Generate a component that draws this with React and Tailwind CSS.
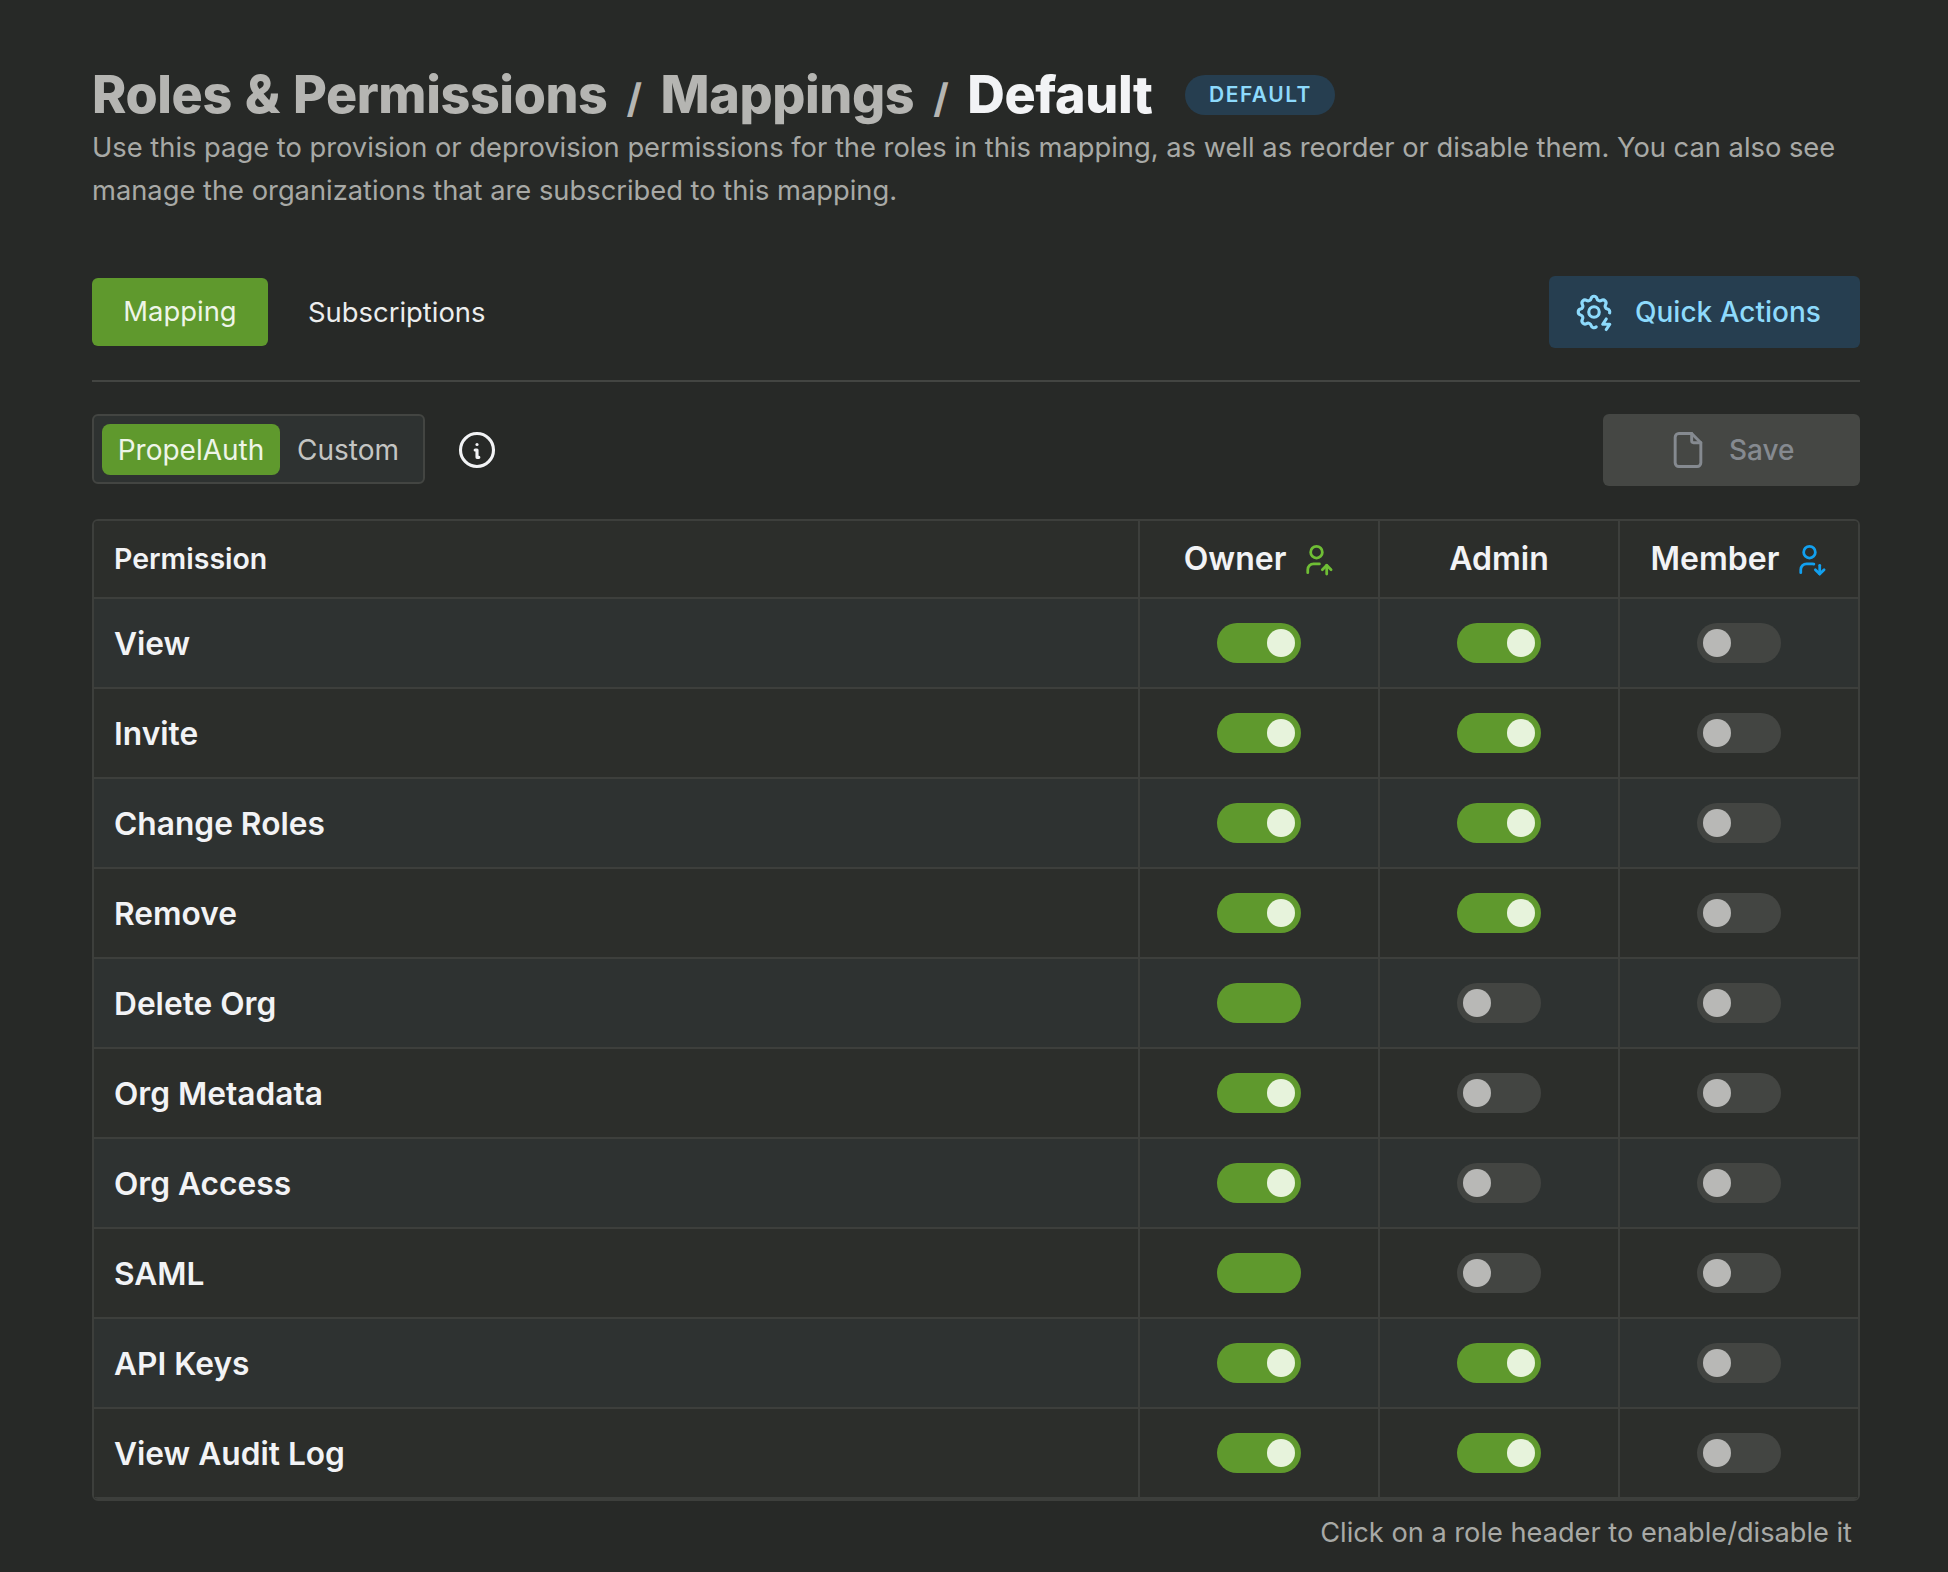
import React from 'react'
import { TbSettingsBolt, TbFile, TbInfoCircle, TbUserUp, TbUserDown } from 'react-icons/tb'

const rows = [
  { name: 'View', owner: true, admin: true, member: false },
  { name: 'Invite', owner: true, admin: true, member: false },
  { name: 'Change Roles', owner: true, admin: true, member: false },
  { name: 'Remove', owner: true, admin: true, member: false },
  { name: 'Delete Org', owner: true, admin: false, member: false, locked: true },
  { name: 'Org Metadata', owner: true, admin: false, member: false },
  { name: 'Org Access', owner: true, admin: false, member: false },
  { name: 'SAML', owner: true, admin: false, member: false, locked: true },
  { name: 'API Keys', owner: true, admin: true, member: false },
  { name: 'View Audit Log', owner: true, admin: true, member: false },
]

const Toggle = ({ on, hideKnob }) => (
  <div
    className={`flex h-10 w-[84px] items-center rounded-full px-1.5 ${
      on ? 'justify-end bg-[#5f992d]' : 'justify-start bg-[#434542]'
    }`}
  >
    {!hideKnob && (
      <div className={`h-7 w-7 rounded-full ${on ? 'bg-[#e7f3dc]' : 'bg-[#b8b8b6]'}`}></div>
    )}
  </div>
)

const App = () => {
  return (
    <div className="min-h-[1572px] bg-[#272927] pl-[92px] pr-[88px] pt-[67px] font-['Inter',sans-serif] text-[#f2f3f5]">
      {/* Header */}
      <div className="flex h-14 items-center">
        <h1 className="text-[52px] font-extrabold leading-none tracking-[-0.4px] text-[#b5b5b2]">
          Roles <span className="mx-[2px]">&amp;</span> Permissions <span className="mx-2 text-[40px] font-bold">/</span> Mappings <span className="mx-2 text-[40px] font-bold">/</span>{' '}
          <span className="text-[#f2f3f5]">Default</span>
        </h1>
        <span className="ml-[33px] flex h-10 w-[150px] items-center justify-center rounded-full bg-[#263e50] text-[21px] font-semibold tracking-[1.5px] text-[#8ddafc]">
          DEFAULT
        </span>
      </div>
      <p className="mt-[3px] text-[27.3px] leading-[43px] text-[#a8a9a6]">
        Use this page to provision or deprovision permissions for the roles in this mapping, as well as reorder or disable them. You can also see manage the organizations that are subscribed to this mapping.
      </p>

      {/* Tabs */}
      <div className="mt-16 flex h-[72px] items-center justify-between">
        <div className="flex items-center gap-10">
          <div className="flex h-[68px] w-[176px] items-center justify-center rounded-md bg-[#5f992d] text-[27.4px] text-[#eef5e8]">
            Mapping
          </div>
          <div className="pt-px text-[27.4px] text-[#eceded]">Subscriptions</div>
        </div>
        <div className="flex h-[72px] w-[311px] items-center gap-5 rounded-md bg-[#263e50] pl-6 text-[28px] font-medium text-[#8ddafc]">
          <TbSettingsBolt size={42} strokeWidth={1.8} />
          Quick Actions
        </div>
      </div>
      <div className="mt-8 h-0.5 bg-[#434542]"></div>

      {/* Source switch + save */}
      <div className="mt-8 flex h-[72px] items-start justify-between">
        <div className="flex items-center">
          <div className="flex h-[70px] w-[333px] items-center rounded-md border-2 border-[#434542] bg-[#2e3231] px-2">
            <div className="flex h-[51px] w-[178px] items-center justify-center rounded-lg bg-[#5f992d] pt-px text-[28px] text-[#eef5e8]">
              PropelAuth
            </div>
            <div className="ml-[17px] pt-px text-[28px] text-[#c4c5c3]">Custom</div>
          </div>
          <TbInfoCircle size={44} strokeWidth={1.7} className="ml-[30px] mt-0.5 text-[#f2f3f5]" />
        </div>
        <div className="flex h-[72px] w-[257px] items-center gap-[19px] rounded-md bg-[#454744] pl-[63px] text-[28px] font-medium text-[#858a90]">
          <TbFile size={44} strokeWidth={1.6} />
          Save
        </div>
      </div>

      {/* Permission table */}
      <div className="mt-[33px] overflow-hidden rounded-md border-2 border-[#3d3f3c]">
        <div className="flex h-[78px] border-b-2 border-[#3d3f3c] bg-[#2c2e2b] font-semibold">
          <div className="flex flex-1 items-center pl-[20px] text-[28.5px]">Permission</div>
          <div className="flex w-[240px] items-center justify-center gap-[13px] border-l-2 border-[#3d3f3c] text-[32px]">
            Owner
            <TbUserUp size={35} strokeWidth={1.9} className="text-[#6fbe35]" />
          </div>
          <div className="flex w-[240px] items-center justify-center border-l-2 border-[#3d3f3c] text-[32px]">
            Admin
          </div>
          <div className="flex w-[240px] items-center justify-center gap-[13px] border-l-2 border-[#3d3f3c] text-[32px]">
            Member
            <TbUserDown size={35} strokeWidth={1.9} className="text-[#12a0ef]" />
          </div>
        </div>
        {rows.map((row, index) => (
          <div
            key={row.name}
            className={`flex h-[90px] border-b-2 border-[#3d3f3c] text-[31.7px] font-semibold ${
              index % 2 === 0 ? 'bg-[#2e3231]' : 'bg-[#2c2e2b]'
            }`}
          >
            <div className="flex flex-1 items-center pl-[20px] pt-[2px]">{row.name}</div>
            <div className="flex w-[240px] items-center justify-center border-l-2 border-[#3d3f3c]">
              <Toggle on={row.owner} hideKnob={row.locked} />
            </div>
            <div className="flex w-[240px] items-center justify-center border-l-2 border-[#3d3f3c]">
              <Toggle on={row.admin} />
            </div>
            <div className="flex w-[240px] items-center justify-center border-l-2 border-[#3d3f3c]">
              <Toggle on={row.member} />
            </div>
          </div>
        ))}
      </div>

      <p className="mt-3 pr-2 text-right text-[27.2px] leading-[40px] text-[#a8a9a6]">
        Click on a role header to enable/disable it
      </p>
    </div>
  )
}

export default App
